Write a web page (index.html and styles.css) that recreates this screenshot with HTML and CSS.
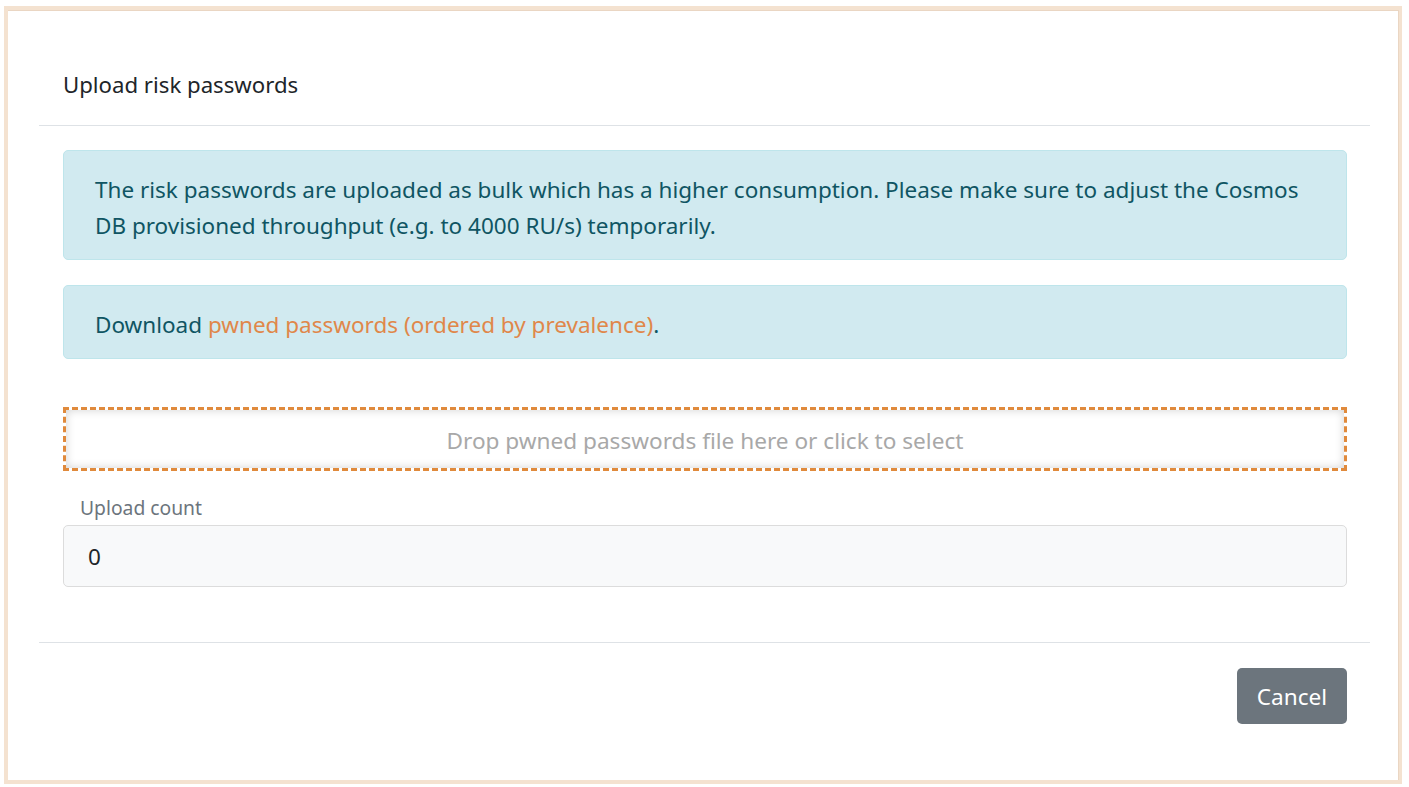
FILE: index.html
```html
<!DOCTYPE html>
<html lang="en">
<head>
<meta charset="utf-8">
<title>Upload risk passwords</title>
<link rel="stylesheet" href="styles.css">
</head>
<body>
<div class="frame">
  <div class="panel">
    <div class="modal">
      <div class="modal-header">
        <h5 class="modal-title">Upload risk passwords</h5>
      </div>
      <div class="modal-body">
        <div class="alert">The risk passwords are uploaded as bulk which has a higher consumption. Please make sure to adjust the Cosmos DB provisioned throughput (e.g. to 4000 RU/s) temporarily.</div>
        <div class="alert">Download <a href="#" class="link">pwned passwords (ordered by prevalence)</a>.</div>
        <div class="dropzone">Drop pwned passwords file here or click to select</div>
        <div class="form-group">
          <label class="label">Upload count</label>
          <div class="input">0</div>
        </div>
      </div>
      <div class="modal-footer">
        <button class="btn">Cancel</button>
      </div>
    </div>
  </div>
</div>
</body>
</html>
```
FILE: styles.css
```css
html, body {
  margin: 0;
  padding: 0;
  background: #ffffff;
}
body {
  font-family: "Noto Sans", "Open Sans", sans-serif;
  color: #212529;
}
.frame {
  margin: 6px 7px 3px 4px;
  height: 778px;
  box-sizing: border-box;
  border: 4px solid #f4e2d0;
  border-right-width: 3px;
}
.panel {
  height: 100%;
  box-sizing: border-box;
  background: #fff;
  border-top: 1px solid #ead6c3;
  border-right: 1px solid #ead6c3;
}
.modal {
  margin: 0 28px 0 31px;
}
.modal-header {
  padding: 59px 24px 25px;
  border-bottom: 1px solid #dee2e6;
}
.modal-title {
  margin: 0;
  font-size: 22.2px;
  font-weight: 400;
  line-height: 30px;
  color: #212529;
}
.modal-body {
  padding: 24px 23px 55px 24px;
  border-bottom: 1px solid #dee2e6;
}
.alert {
  background: #d1eaf0;
  border: 1px solid #bee5eb;
  border-radius: 5px;
  color: #0f5563;
  font-size: 22.5px;
  line-height: 36px;
  padding: 21px 32px 15px 31px;
  margin-bottom: 25px;
}
.alert + .alert {
  margin-bottom: 48px;
}
.link {
  color: #e0874a;
  text-decoration: none;
}
.dropzone {
  height: 64px;
  box-sizing: border-box;
  border: 3px dashed #e08a3c;
  box-shadow: inset 0 0 10px rgba(0, 0, 0, 0.18);
  display: flex;
  align-items: center;
  justify-content: center;
  color: #a8a8a8;
  font-size: 22.6px;
  padding-top: 2px;
}
.form-group {
  margin-top: 23px;
}
.label {
  display: block;
  padding-left: 17px;
  font-size: 19.3px;
  line-height: 27px;
  color: #6c757d;
  margin-bottom: 4px;
}
.input {
  height: 62px;
  box-sizing: border-box;
  background: #f8f9fa;
  border: 1px solid #dcdcdc;
  border-radius: 5px;
  padding: 0 24px;
  display: flex;
  align-items: center;
  font-size: 22.5px;
  color: #212529;
}
.modal-footer {
  display: flex;
  justify-content: flex-end;
  padding: 25px 23px 24px;
}
.btn {
  height: 56px;
  width: 110px;
  border: 0;
  border-radius: 5px;
  background: #6c757d;
  color: #fff;
  font-family: "Noto Sans", "Open Sans", sans-serif;
  font-size: 22.6px;
  padding: 0;
  cursor: pointer;
}
```
